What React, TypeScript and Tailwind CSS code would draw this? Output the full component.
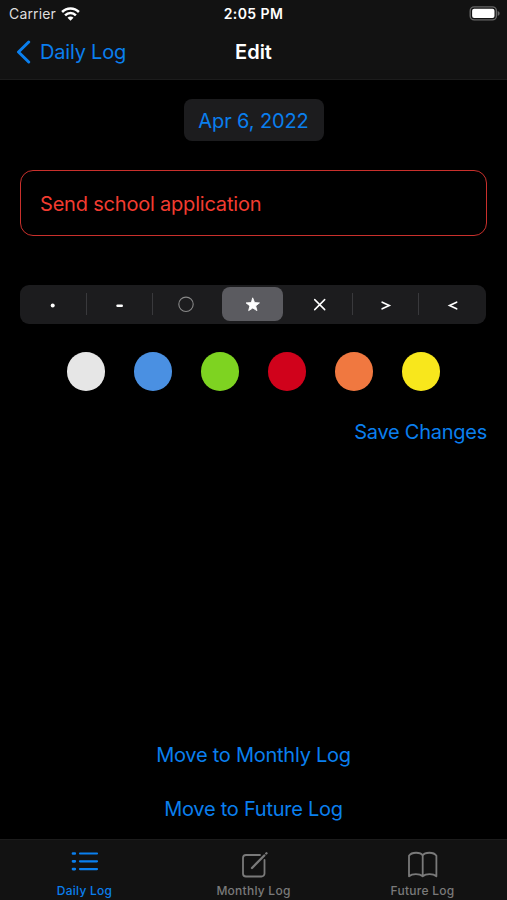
import { useState } from 'react';

const BULLETS = ['dot', 'dash', 'circle', 'star', 'cross', 'next', 'prev'];

const COLORS = [
    { name: 'White', className: 'bg-[#e6e6e6]' },
    { name: 'Blue', className: 'bg-[#4a90e2]' },
    { name: 'Green', className: 'bg-[#7ed321]' },
    { name: 'Red', className: 'bg-[#d0021b]' },
    { name: 'Orange', className: 'bg-[#f07840]' },
    { name: 'Yellow', className: 'bg-[#f8e71c]' },
];

function WifiIcon() {
    return (
        <svg width="19" height="14" viewBox="0 0 19 14" fill="none" stroke="#fff" strokeWidth="2.5">
            <path d="M1.1 5a11.9 11.9 0 0 1 16.8 0" />
            <path d="M4.1 8.3a7.6 7.6 0 0 1 10.8 0" />
            <path d="M9.5 13.8l-3-3.1a4.2 4.2 0 0 1 6 0z" fill="#fff" stroke="none" />
        </svg>
    );
}

function BatteryIcon() {
    return (
        <svg width="31" height="15" viewBox="0 0 31 15" fill="none">
            <rect x="1.2" y="0.9" width="26.2" height="13" rx="4" stroke="#666" strokeWidth="1.4" />
            <rect x="3.1" y="2.8" width="22.4" height="9.2" rx="2" fill="#fff" />
            <path d="M28.7 5v4.8c1.2-.4 1.9-1.3 1.9-2.4S29.9 5.4 28.7 5z" fill="#666" />
        </svg>
    );
}

function BulletIcon({ kind }: { kind: string }) {
    return (
        <svg width="20" height="20" viewBox="0 0 20 20" fill="none" stroke="#fff" strokeWidth="1.6" strokeLinecap="round" strokeLinejoin="round">
            {kind === 'dot' && <circle cx="9.7" cy="11.5" r="2" fill="#fff" stroke="none" />}
            {kind === 'dash' && <path d="M7.5 11.7h4.3" strokeWidth="2.4" />}
            {kind === 'circle' && <circle cx="10" cy="10.3" r="7.2" stroke="#888" strokeWidth="1.1" />}
            {kind === 'star' && (
                <path d="M9.8 4.2l1.75 4.4 4.9.3-3.8 3 1.3 4.7-4.15-2.6-4.15 2.6 1.3-4.7-3.8-3 4.9-.3z" fill="#fff" strokeWidth="0.9" />
            )}
            {kind === 'cross' && <path d="M4.7 5.6l10 10M14.7 5.6l-10 10" strokeWidth="1.5" />}
            {kind === 'next' && <path d="M6.2 8.2l7 3.3-7 3.3" strokeWidth="1.7" strokeLinejoin="miter" />}
            {kind === 'prev' && <path d="M13.6 8.2l-7 3.3 7 3.3" strokeWidth="1.7" strokeLinejoin="miter" />}
        </svg>
    );
}

function ListIcon() {
    return (
        <svg width="32" height="32" viewBox="0 0 32 32" fill="none" stroke="currentColor" strokeWidth="2.2" strokeLinecap="round">
            <path d="M4 7.5h1.8M4 15.3h1.8M4 23.1h1.8" strokeWidth="2.7" />
            <path d="M11 7.500h17M11 15.300h17M11 23.100h17" />
        </svg>
    );
}

function ComposeIcon() {
    return (
        <svg width="32" height="32" viewBox="0 0 32 32" fill="none" stroke="currentColor" strokeWidth="1.8" strokeLinecap="round" strokeLinejoin="round">
            <path d="M22 9H8a3 3 0 0 0-3 3v15.5a3 3 0 0 0 3 3h15.500a3 3 0 0 0 3-3V14" />
            <path d="M14 22L26.3 9.5M28.200 7.500l.3-.3" strokeWidth="2.3" />
        </svg>
    );
}

function BookIcon() {
    return (
        <svg width="32" height="32" viewBox="0 0 32 32" fill="none" stroke="currentColor" strokeWidth="1.8" strokeLinejoin="round">
            <path d="M15.700 9.500C13.500 5.900 4.700 5.700 2 9.700v20.600c3.200-2.800 10.500-2.800 13.700 0 3.200-2.800 10.500-2.800 13.700 0V9.700C26.700 5.700 17.900 5.900 15.700 9.500zM15.700 9.500v20.500" />
        </svg>
    );
}

const TABS = [
    { label: 'Daily Log', icon: ListIcon },
    { label: 'Monthly Log', icon: ComposeIcon },
    { label: 'Future Log', icon: BookIcon },
];

export default function App() {
    const [bullet, setBullet] = useState('star');
    const [tab, setTab] = useState('Daily Log');

    return (
        <div className="flex h-screen w-full flex-col overflow-hidden bg-black font-['Inter',sans-serif] text-[#0a7fee]">
            <header className="h-20 shrink-0 border-b border-[#1c1c1c] bg-[#121212] text-white">
                <div className="grid h-[27px] grid-cols-3 items-center px-[7px] text-[14px] leading-none">
                    <div className="flex items-center gap-[5px] pl-[2px] tracking-[0.15px] text-[#dedede]">
                        <span>Carrier</span>
                        <WifiIcon />
                    </div>
                    <span className="text-center font-semibold tracking-[0.4px]">2:05 PM</span>
                    <div className="flex justify-end">
                        <BatteryIcon />
                    </div>
                </div>
                <div className="grid h-[50px] grid-cols-3 items-center px-4 text-[20px]">
                    <button className="flex items-center gap-[9px] tracking-[-0.2px] text-[#0a7fee]">
                        <svg width="15" height="24" viewBox="0 0 15 24" fill="none" stroke="currentColor" strokeWidth="3" strokeLinecap="round" strokeLinejoin="round">
                            <path d="M12.7 2L2.5 12l10.2 10" />
                        </svg>
                        <span className="whitespace-nowrap">Daily Log</span>
                    </button>
                    <h1 className="text-center font-semibold">Edit</h1>
                </div>
            </header>

            <main className="flex flex-1 flex-col px-5 text-[20px] leading-6 tracking-[-0.2px]">
                <button className="mt-[19px] h-[42px] w-[140px] self-center rounded-[8px] bg-[#1c1c1e] pt-px tracking-[-0.1px]">
                    Apr 6, 2022
                </button>

                <div className="mt-[29px] flex h-[66px] items-center rounded-[13px] border-[1.5px] border-[#c9302c] pt-px pl-[19px] text-[#f23c30]">
                    Send school application
                </div>

                <div className="mt-[49px] grid h-[39px] w-[466px] grid-cols-7 rounded-[9px] bg-[#1c1c1e] pb-px">
                    {BULLETS.map((kind, i) => (
                        <div key={kind} className="relative flex items-center justify-center">
                            <button
                                onClick={() => setBullet(kind)}
                                className={`flex h-[34px] w-[61px] items-center justify-center rounded-[8px] ${bullet === kind ? 'bg-[#5b5b60]' : ''}`}
                            >
                                <BulletIcon kind={kind} />
                            </button>
                            {i < 6 && bullet !== kind && bullet !== BULLETS[i + 1] && (
                                <span className="absolute right-0 h-[22px] w-px bg-[#39393c]" />
                            )}
                        </div>
                    ))}
                </div>

                <div className="mt-7 flex justify-between px-[46.5px]">
                    {COLORS.map((color) => (
                        <button key={color.name} aria-label={color.name} className={`size-[38.5px] rounded-full ${color.className}`} />
                    ))}
                </div>

                <button className="mt-[29.5px] self-end tracking-[-0.25px]">Save Changes</button>

                <div className="mt-auto flex flex-col items-center gap-[30px] pb-[18px] tracking-[-0.25px]">
                    <button>Move to Monthly Log</button>
                    <button>Move to Future Log</button>
                </div>
            </main>

            <nav className="grid h-[61px] shrink-0 grid-cols-3 border-t border-[#1c1c1c] bg-[#121212] text-[12px] font-medium tracking-[0.25px]">
                {TABS.map(({ label, icon: Icon }) => (
                    <button
                        key={label}
                        onClick={() => setTab(label)}
                        className={`flex flex-col items-center pt-[6px] ${tab === label ? 'text-[#0a7fee]' : 'text-[#7a7a7a]'}`}
                    >
                        <Icon />
                        <span className="mt-[5px] leading-4">{label}</span>
                    </button>
                ))}
            </nav>
        </div>
    );
}
